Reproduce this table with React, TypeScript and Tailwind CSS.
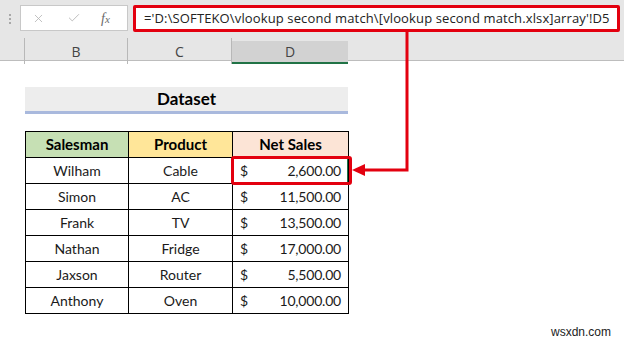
import { Check, X } from "lucide-react";

const rows = [
  { name: "Wilham", product: "Cable", sales: "2,600.00" },
  { name: "Simon", product: "AC", sales: "11,500.00" },
  { name: "Frank", product: "TV", sales: "13,500.00" },
  { name: "Nathan", product: "Fridge", sales: "17,000.00" },
  { name: "Jaxson", product: "Router", sales: "5,500.00" },
  { name: "Anthony", product: "Oven", sales: "10,000.00" },
];

const cols = "grid grid-cols-[25px_103px_104px_116px_1fr]";

export default function App() {
  return (
    <div className="relative h-[340px] w-[624px] overflow-hidden bg-white font-['Lato',sans-serif] text-[#1a1a1a]">
      {/* formula bar */}
      <div className="flex h-[38px] items-start bg-[#e6e6e6] pt-[5px]">
        <div className="flex w-[20px] flex-col items-center gap-[2px] pt-[9px]">
          <span className="h-[2px] w-[2px] bg-[#a8a8a8]" />
          <span className="h-[2px] w-[2px] bg-[#a8a8a8]" />
          <span className="h-[2px] w-[2px] bg-[#a8a8a8]" />
        </div>
        <div className="flex h-[26px] w-[108px] items-center border border-[#c8c8c8] bg-white">
          <X className="ml-[11px] h-[13px] w-[13px] text-[#b4b4b4]" strokeWidth={1.5} />
          <Check className="ml-[22px] h-[14px] w-[14px] text-[#b4b4b4]" strokeWidth={1.5} />
          <span className="ml-[20px] font-['Liberation_Serif',serif] text-[14px] italic text-[#6a6a6a]">
            f<span className="text-[11px]">x</span>
          </span>
        </div>
        <div className="ml-[5px] flex h-[27px] w-[487px] items-center rounded-[2px] border-[3px] border-[#e3000f] bg-white pl-[8px] font-['Open_Sans',sans-serif] text-[13px] tracking-[0.13px] text-[#222]">
          ='D:\SOFTEKO\vlookup second match\[vlookup second match.xlsx]array'!D5
        </div>
      </div>

      {/* column headers */}
      <div className={`${cols} h-[23px] border-b border-[#bdbdbd] bg-[#e6e6e6] font-['Open_Sans',sans-serif] text-[14px] text-[#444]`}>
        <div className="border-r border-[#b8b8b8]" />
        <div className="flex items-center justify-center border-r border-[#b8b8b8]">B</div>
        <div className="flex items-center justify-center border-r border-[#b8b8b8]">C</div>
        <div className="mt-[3px] flex items-center justify-center border-b-2 border-[#217346] bg-[#d2d2d2]">D</div>
        <div />
      </div>

      {/* sheet body */}
      <div className="pt-[26px]">
        <div className="ml-[25px] flex h-[27px] w-[323px] items-center justify-center border-b-[3px] border-[#a9b9dd] bg-[#ededed] text-[17px] font-bold text-black">
          Dataset
        </div>

        <div className="ml-[25px] mt-[17px] w-[324px] border-l border-t border-black text-[14px]">
          <div className="grid h-[26px] grid-cols-[103px_104px_116px] text-[15px] font-bold text-black">
            <div className="flex items-center justify-center border-b border-r border-black bg-[#c6e0b4]">Salesman</div>
            <div className="flex items-center justify-center border-b border-r border-black bg-[#ffe699]">Product</div>
            <div className="flex items-center justify-center border-b border-r border-black bg-[#fce4d6]">Net Sales</div>
          </div>
          {rows.map((r) => (
            <div key={r.name} className="grid h-[26px] grid-cols-[103px_104px_116px]">
              <div className="flex items-center justify-center border-b border-r border-black">{r.name}</div>
              <div className="flex items-center justify-center border-b border-r border-black">{r.product}</div>
              <div className="flex items-center justify-between border-b border-r border-black pl-[7px] pr-[7px]">
                <span>$</span>
                <span className="tracking-[-0.2px]">{r.sales}</span>
              </div>
            </div>
          ))}
        </div>
      </div>

      {/* highlighted cell D5 */}
      <div className="absolute left-[231px] top-[156px] h-[29px] w-[121px] rounded-[3px] border-[3px] border-[#e3000f]">
        <div className="absolute right-[1px] top-0 h-full w-[1px] bg-[#217346]" />
      </div>

      {/* link arrow from formula to cell */}
      <svg className="absolute left-0 top-0" width="624" height="340">
        <path d="M407 31 V170 H362" fill="none" stroke="#e3000f" strokeWidth="3" />
        <path d="M352 170 L365 164 L365 176 Z" fill="#e3000f" />
      </svg>

      <div className="absolute left-[551px] top-[323px] font-['Liberation_Sans',sans-serif] text-[12px] text-[#222]">
        wsxdn.com
      </div>
    </div>
  );
}
